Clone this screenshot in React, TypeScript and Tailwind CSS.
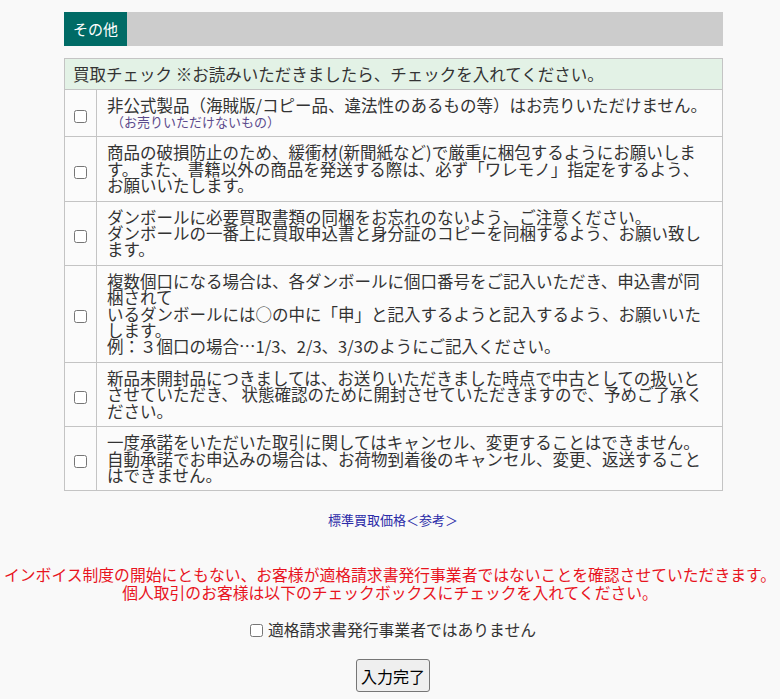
import { useState } from "react";

interface Item {
  id: string;
  lines: string[];
  note?: string;
}

const items: Item[] = [
  {
    id: "c1",
    lines: ["非公式製品（海賊版/コピー品、違法性のあるもの等）はお売りいただけません。"],
    note: "（お売りいただけないもの）",
  },
  {
    id: "c2",
    lines: [
      "商品の破損防止のため、緩衝材(新聞紙など)で厳重に梱包するようにお願いしま",
      "す。また、書籍以外の商品を発送する際は、必ず「ワレモノ」指定をするよう、",
      "お願いいたします。",
    ],
  },
  {
    id: "c3",
    lines: [
      "ダンボールに必要買取書類の同梱をお忘れのないよう、ご注意ください。",
      "ダンボールの一番上に買取申込書と身分証のコピーを同梱するよう、お願い致し",
      "ます。",
    ],
  },
  {
    id: "c4",
    lines: [
      "複数個口になる場合は、各ダンボールに個口番号をご記入いただき、申込書が同",
      "梱されて",
      "いるダンボールには○の中に「申」と記入するようと記入するよう、お願いいた",
      "します。",
      "例：３個口の場合…1/3、2/3、3/3のようにご記入ください。",
    ],
  },
  {
    id: "c5",
    lines: [
      "新品未開封品につきましては、お送りいただきました時点で中古としての扱いと",
      "させていただき、 状態確認のために開封させていただきますので、予めご了承く",
      "ださい。",
    ],
  },
  {
    id: "c6",
    lines: [
      "一度承諾をいただいた取引に関してはキャンセル、変更することはできません。",
      "自動承諾でお申込みの場合は、お荷物到着後のキャンセル、変更、返送すること",
      "はできません。",
    ],
  },
];

const App = () => {
  const [checked, setChecked] = useState<Record<string, boolean>>({});
  const [notInvoice, setNotInvoice] = useState(false);

  const toggle = (id: string) => {
    setChecked((prev) => ({ ...prev, [id]: !prev[id] }));
  };

  return (
    <div className="min-h-[699px] bg-[#f9f9f9] pt-3 pb-2 text-[#333] font-['Meiryo','Noto_Sans_CJK_JP',sans-serif]">
      {/* Section header */}
      <div className="ml-[64px] w-[659px] h-[34px] flex bg-[#cccccc]">
        <div className="px-[9px] flex items-center bg-[#006b66] text-white text-[15px]">
          その他
        </div>
      </div>

      {/* Check list */}
      <table className="ml-[64px] mt-3 w-[659px] border-collapse border border-[#c4c4c4] text-[16.5px] leading-[16.4px]">
        <thead>
          <tr className="bg-[#e3f2e6]">
            <th
              colSpan={2}
              className="h-[31px] px-[8px] text-left font-normal border border-[#c4c4c4]"
            >
              買取チェック ※お読みいただきましたら、チェックを入れてください。
            </th>
          </tr>
        </thead>
        <tbody>
          {items.map((item) => (
            <tr key={item.id} className="bg-[#fbfbfb]">
              <td className="w-[32px] border border-[#c4c4c4] text-center align-middle">
                <input
                  type="checkbox"
                  checked={!!checked[item.id]}
                  onChange={() => toggle(item.id)}
                  className="w-[13px] h-[13px] mt-[4px] align-middle"
                />
              </td>
              <td className="border border-[#c4c4c4] pl-[10px] pr-2 py-[7px] align-middle">
                {item.lines.map((line, i) => (
                  <span key={i} className="block whitespace-nowrap">
                    {line}
                  </span>
                ))}
                {item.note && (
                  <span className="block mt-[1px] pl-[4px] text-[13px] leading-[15px] text-[#5b4a8c]">
                    {item.note}
                  </span>
                )}
              </td>
            </tr>
          ))}
        </tbody>
      </table>

      <div className="ml-[6px] mt-[15px] text-center">
        <a href="#" className="text-[13px] text-[#2b2ba8]">
          標準買取価格＜参考＞
        </a>
      </div>

      <div className="mt-[36px] text-center text-[15.8px] leading-[18px] text-[#e8141e]">
        <p>インボイス制度の開始にともない、お客様が適格請求書発行事業者ではないことを確認させていただきます。</p>
        <p>個人取引のお客様は以下のチェックボックスにチェックを入れてください。</p>
      </div>

      <div className="mt-[16px] ml-[6px] flex justify-center items-center gap-[5px] text-[15.8px]">
        <input
          type="checkbox"
          checked={notInvoice}
          onChange={() => setNotInvoice(!notInvoice)}
          className="w-[13px] h-[13px]"
        />
        <span>適格請求書発行事業者ではありません</span>
      </div>

      <div className="mt-[17px] ml-[6px] flex justify-center">
        <button
          type="button"
          className="w-[74px] h-[33px] bg-[#efefef] border border-[#767676] rounded-[3px] text-[16px] text-black"
        >
          入力完了
        </button>
      </div>
    </div>
  );
};

export default App;
